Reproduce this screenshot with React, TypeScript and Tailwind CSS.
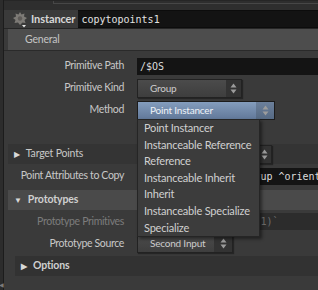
import React from "react";

function Arrows() {
  return (
    <svg width="7" height="11" viewBox="0 0 7 11">
      <path d="M3.5 0.5 L6.5 4.5 H0.5 Z" fill="#9c9c9c" />
      <path d="M3.5 10.5 L6.5 6.5 H0.5 Z" fill="#9c9c9c" />
    </svg>
  );
}

function NodeIcon() {
  return (
    <svg width="16" height="17" viewBox="0 0 16 17">
      <path
        d="M8 1 L9.5 3.5 L12.5 2.5 L12 5.5 L15 7 L12.5 9 L13.5 12 L10.5 11.5 L8 14 L6 11.5 L2.5 12 L3.5 9 L1 7 L4 5.5 L3.5 2.5 L6.5 3.5 Z"
        fill="#7d7a76"
      />
      <circle cx="8" cy="7.5" r="2.2" fill="#5e5b58" />
      <path d="M10 14 L14 14 L12 16.5 Z" fill="#e6e6e6" />
    </svg>
  );
}

function Dropdown({ label, width, arrowWidth }: { label: string; width: string; arrowWidth: string }) {
  return (
    <div className={`flex h-[19px] ${width} border border-[#222222] shadow-[1px_1px_1px_rgba(0,0,0,0.35)]`}>
      <div className="flex-1 flex items-center pl-[12px] bg-linear-to-b from-[#4b4b4b] to-[#3e3e3e] text-[10px] tracking-[-0.2px] text-[#cccccc]">
        {label}
      </div>
      <div className={`${arrowWidth} flex items-center justify-center bg-[#333333]`}>
        <Arrows />
      </div>
    </div>
  );
}

function Label({ children, dim }: { children: React.ReactNode; dim?: boolean }) {
  return (
    <div className={`w-[120px] shrink-0 text-right text-[10.5px] tracking-[-0.35px] whitespace-nowrap ${dim ? "text-[#7c7c7c]" : "text-[#c8c8c8]"}`}>
      {children}
    </div>
  );
}

const menuItems = [
  "Point Instancer",
  "Instanceable Reference",
  "Reference",
  "Instanceable Inherit",
  "Inherit",
  "Instanceable Specialize",
  "Specialize",
];

export default function App() {
  return (
    <div className="w-[318px] h-[290px] overflow-hidden bg-[#3a3a3a] flex relative [font-family:Lato,sans-serif]">
      {/* left edge */}
      <div className="w-[4px] shrink-0 bg-[#2c2c2c] border-r border-[#1c1c1c] flex flex-col justify-end items-center pb-[2px]">
        <span className="text-[6px] leading-none text-[#7a7a7a]">◀</span>
      </div>

      <div className="flex-1 flex flex-col min-w-0">
        {/* top strip */}
        <div className="h-[10px] bg-[#2e2e2e] border-t border-[#262626]">
          <div className="ml-[49px] h-[3px] border-l border-b border-[#474747]" />
        </div>

        {/* header */}
        <div className="h-[18px] flex items-center">
          <div className="ml-[8px] mt-[1px]">
            <NodeIcon />
          </div>
          <span className="ml-[3px] text-[11px] font-bold tracking-[-0.1px] text-[#d6d6d6]">Instancer</span>
          <div className="ml-[3px] flex-1 h-[18px] bg-[#131313] border-y border-[#0c0c0c] flex items-center pl-[3px] [font-family:'DejaVu_Sans_Mono',monospace] text-[10px] text-[#e2e2e2]">
            copytopoints1
          </div>
        </div>
        <div className="h-[1px] bg-[#252525]" />

        {/* General tab */}
        <div className="ml-[4px] h-[21px] bg-[#4d4d4d] flex items-center pl-[17px] text-[10.5px] tracking-[-0.2px] text-[#c4c4c4]">
          General
        </div>
        <div className="h-[1px] bg-[#2a2a2a]" />

        {/* parameters */}
        <div className="pt-[4px] flex flex-col">
          <div className="h-[22px] flex items-center">
            <Label>Primitive Path</Label>
            <div className="ml-[13px] flex-1 h-[17px] bg-[#141414] flex items-center pl-[3px] [font-family:'DejaVu_Sans_Mono',monospace] text-[10px] text-[#dddddd]">
              /$OS
            </div>
          </div>

          <div className="h-[22px] flex items-center">
            <Label>Primitive Kind</Label>
            <div className="ml-[13px]">
              <Dropdown label="Group" width="w-[105px]" arrowWidth="w-[15px]" />
            </div>
          </div>

          <div className="h-[22px] flex items-center">
            <Label>Method</Label>
            <div className="ml-[13px] flex h-[19px] w-[138px] border border-[#1c1c1c]">
              <div className="flex-1 flex items-center pl-[12px] bg-linear-to-b from-[#849dbd] to-[#62799a] text-[10px] tracking-[-0.2px] text-[#eef2f7]">
                Point Instancer
              </div>
              <div className="w-[18px] flex items-center justify-center bg-linear-to-b from-[#6c809b] to-[#566a84]">
                <Arrows />
              </div>
            </div>
          </div>

          <div className="h-[22px]" />

          <div className="h-[22px] flex items-center">
            <div className="ml-[4px] flex-1 h-[20px] bg-[#343434] flex items-center">
              <div className="w-[129px] flex items-center pl-[6px] text-[10.5px] tracking-[-0.2px] text-[#c8c8c8]">
                <span className="text-[8px] text-[#d8d8d8] mr-[6px]">▶</span>
                Target Points
              </div>
              <Dropdown label="" width="w-[135px]" arrowWidth="w-[13px]" />
            </div>
          </div>

          <div className="h-[22px] flex items-center">
            <Label>Point Attributes to Copy</Label>
            <div className="ml-[13px] flex-1 h-[17px] bg-[#141414] flex items-center pl-[3px] overflow-hidden whitespace-nowrap [font-family:'DejaVu_Sans_Mono',monospace] text-[10px] text-[#dddddd]">
              * ^P ^N ^v ^pscale ^up ^orient
            </div>
          </div>

          <div className="h-[22px] flex items-center pt-[3px]">
            <div className="ml-[4px] flex-1 h-[20px] bg-[#4a4a4a] flex items-center pl-[6px] text-[10.5px] tracking-[-0.1px] font-bold text-[#d0d0d0]">
              <span className="text-[8px] text-[#d8d8d8] mr-[6px]">▼</span>
              Prototypes
            </div>
          </div>

          <div className="h-[22px] flex items-center pt-[3px]">
            <Label dim>Prototype Primitives</Label>
            <div className="ml-[13px] flex-1 h-[17px] bg-[#2c2c2c] flex items-center pl-[3px] overflow-hidden whitespace-nowrap [font-family:'DejaVu_Sans_Mono',monospace] text-[10px] text-[#6c6c6c]">
              `lopinputprims(".", 1)`
            </div>
          </div>

          <div className="h-[22px] flex items-center pt-[3px]">
            <Label>Prototype Source</Label>
            <div className="ml-[13px]">
              <Dropdown label="Second Input" width="w-[96px]" arrowWidth="w-[18px]" />
            </div>
          </div>

          <div className="h-[22px] flex items-center pt-[4px]">
            <div className="ml-[11px] flex-1 h-[20px] bg-[#323232] flex items-center pl-[6px] text-[10.5px] tracking-[-0.1px] font-bold text-[#d0d0d0]">
              <span className="text-[8px] text-[#d8d8d8] mr-[6px]">▶</span>
              Options
            </div>
          </div>
        </div>
      </div>

      {/* popup menu */}
      <div className="absolute left-[137px] top-[119px] w-[123px] bg-[#3c3c3c] border border-[#252525] shadow-[2px_2px_3px_rgba(0,0,0,0.45)] flex flex-col">
        {menuItems.map((item) => (
          <div key={item} className="h-[16.6px] flex items-center pl-[6px] text-[11px] tracking-[-0.2px] text-[#d0d0d0] whitespace-nowrap">
            {item}
          </div>
        ))}
      </div>
    </div>
  );
}
